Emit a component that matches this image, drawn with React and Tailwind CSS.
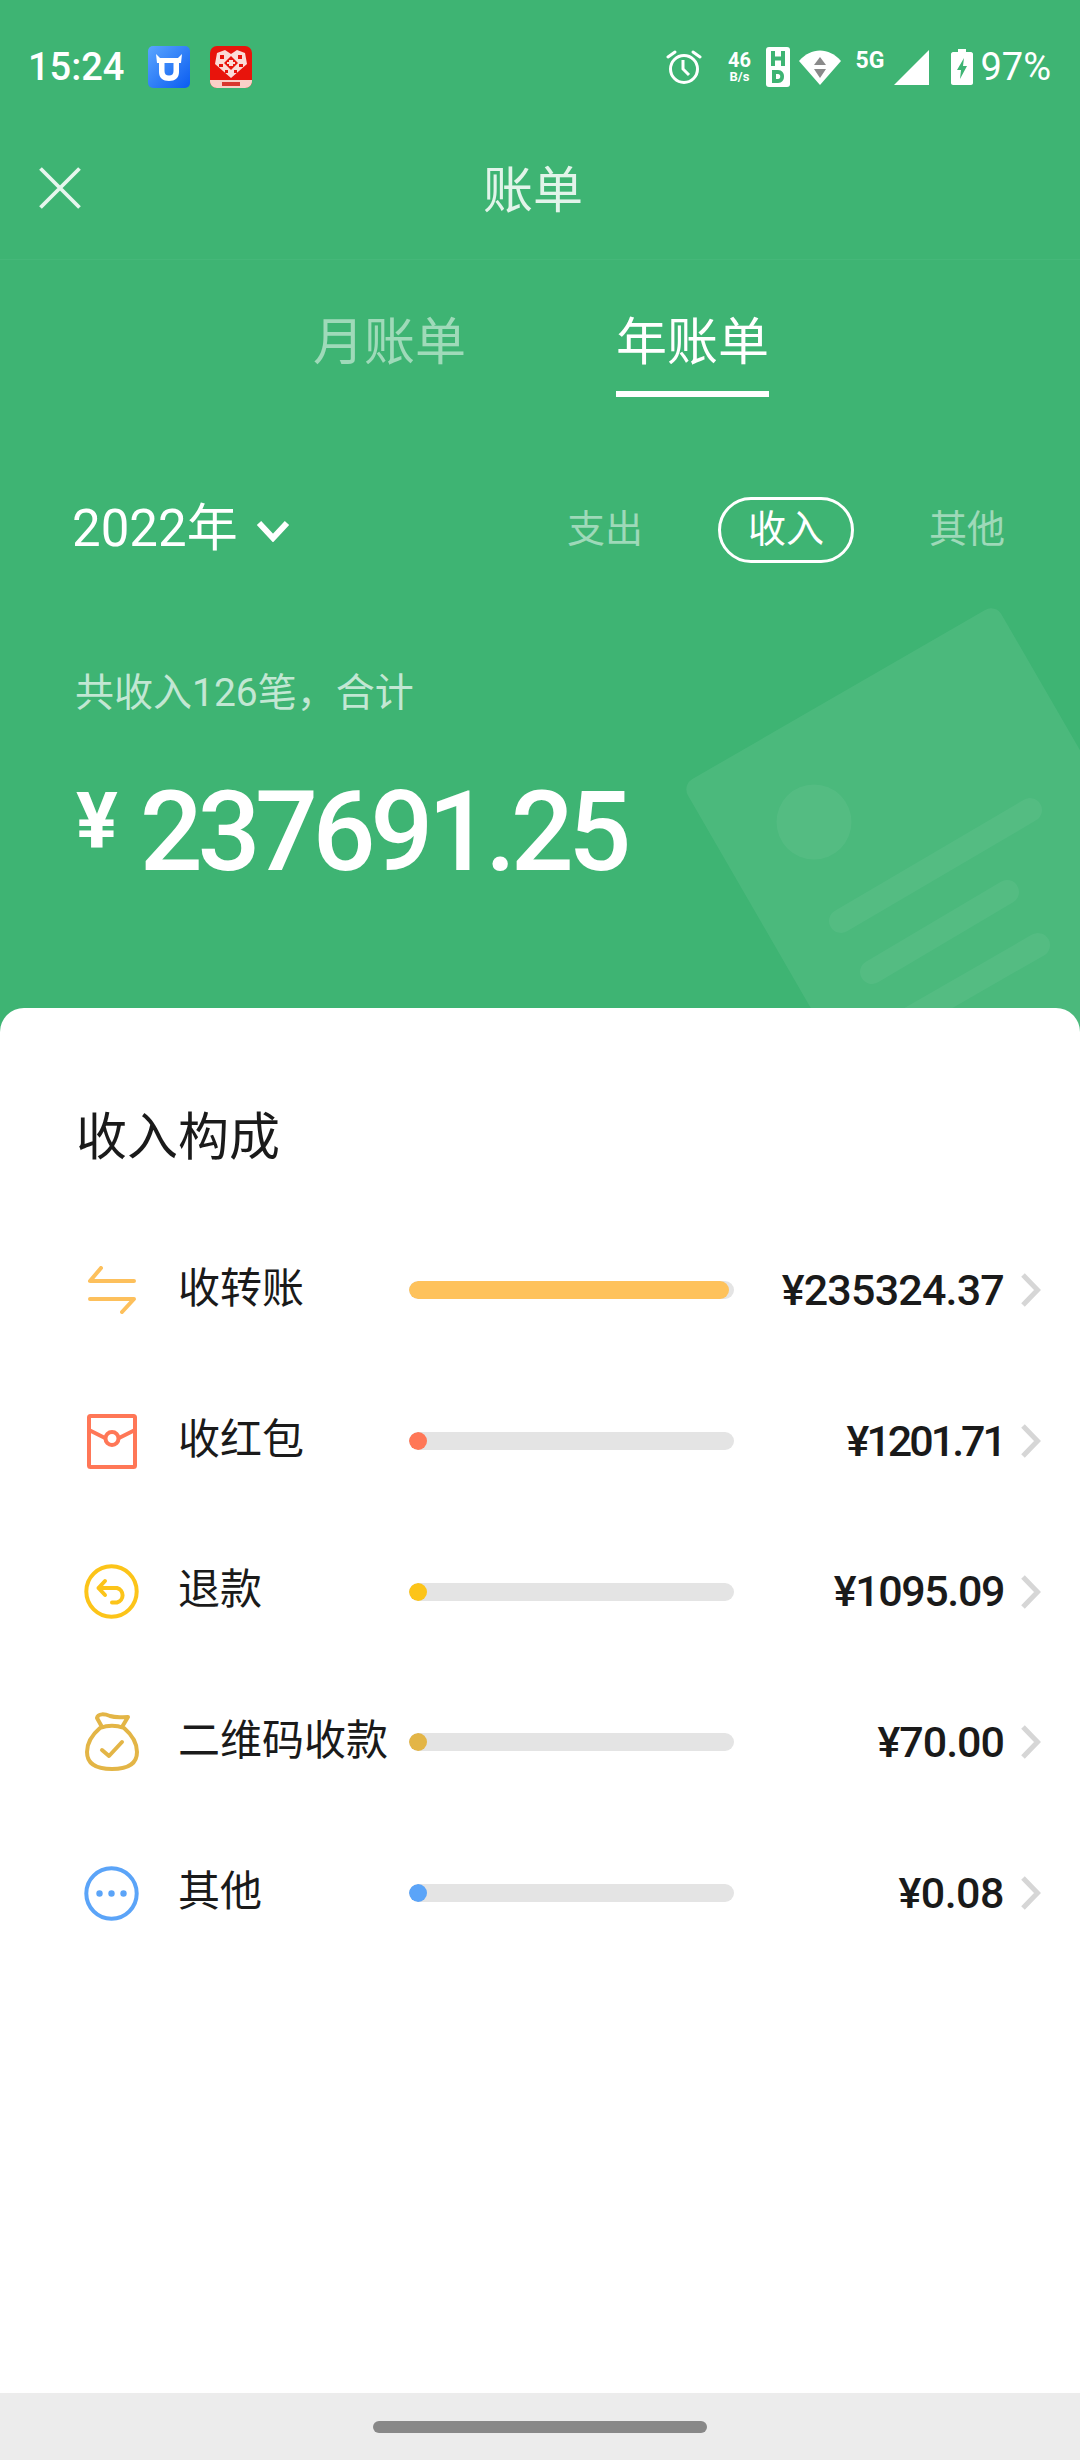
import React from "react";

const CJK = "font-['Roboto','Noto_Sans_CJK_SC',sans-serif]";

const Chevron = () => (
  <svg width="21" height="34" viewBox="0 0 21 34" className="ml-[16px] shrink-0">
    <path d="M3 2 L17.5 17 L3 32" fill="none" stroke="#d6d6d6" strokeWidth="5" />
  </svg>
);

const IconTransfer = () => (
  <svg width="48" height="48" viewBox="0 0 48 48">
    <g fill="none" stroke="#fdc05c" strokeWidth="4" strokeLinecap="round" strokeLinejoin="round">
      <path d="M13 2 L2 15 H46" />
      <path d="M2 33 H46 L34 46" />
    </g>
  </svg>
);

const IconPacket = () => (
  <svg width="50" height="55" viewBox="0 0 50 55">
    <g fill="none" stroke="#ff7757" strokeWidth="4" strokeLinejoin="round">
      <rect x="2" y="2" width="46" height="51" rx="1.5" />
      <path d="M2 16 L18 24 M32 24 L48 16" />
      <circle cx="25" cy="24.5" r="6.5" />
    </g>
  </svg>
);

const IconRefund = () => (
  <svg width="55" height="55" viewBox="0 0 55 55">
    <g fill="none" stroke="#fcc419" strokeWidth="4" strokeLinecap="round" strokeLinejoin="round">
      <circle cx="27.5" cy="27.5" r="25.2" />
      <path d="M21 17 L14.5 24 L21 31 M14.5 24 H33 A7.5 7.5 0 0 1 33 38.5 H28" />
    </g>
  </svg>
);

const IconBag = () => (
  <svg width="54" height="60" viewBox="0 0 54 60">
    <g fill="none" stroke="#e3b546" strokeWidth="4" strokeLinecap="round" strokeLinejoin="round">
      <path d="M15 16 C8 22 2 30 2 40 C2 53 13 57 27 57 C41 57 52 53 52 40 C52 30 46 22 39 16 C31 13 23 13 15 16 Z" />
      <path d="M17 15 L12 6 C13 1 20 2 25 4 C31 6 36 5 43 5 L37 15" />
      <path d="M17 38 L24 44 L37 30" />
    </g>
  </svg>
);

const IconMore = () => (
  <svg width="55" height="55" viewBox="0 0 55 55">
    <circle cx="27.5" cy="27.5" r="25.2" fill="none" stroke="#5ba4f8" strokeWidth="4" />
    <circle cx="15.5" cy="27.5" r="3.2" fill="#5ba4f8" />
    <circle cx="27.5" cy="27.5" r="3.2" fill="#5ba4f8" />
    <circle cx="39.5" cy="27.5" r="3.2" fill="#5ba4f8" />
  </svg>
);

const rows = [
  { icon: <IconTransfer />, name: "收转账", amount: "¥235324.37", color: "bg-[#fec25b]", w: "w-[320px]", track: "tracking-[-0.8px]" },
  { icon: <IconPacket />, name: "收红包", amount: "¥1201.71", color: "bg-[#ff7757]", w: "w-[18px]", track: "tracking-[-3px]" },
  { icon: <IconRefund />, name: "退款", amount: "¥1095.09", color: "bg-[#fcc419]", w: "w-[18px]", track: "tracking-[-1.4px]" },
  { icon: <IconBag />, name: "二维码收款", amount: "¥70.00", color: "bg-[#e3b546]", w: "w-[18px]", track: "tracking-[-1px]" },
  { icon: <IconMore />, name: "其他", amount: "¥0.08", color: "bg-[#5ba4f8]", w: "w-[18px]", track: "tracking-[-0.5px]" },
];

const Row = ({ r }) => (
  <div className="flex h-[150.7px] items-center pl-[84px] pr-[39px]">
    <div className="flex w-[55px] shrink-0 items-center justify-center">{r.icon}</div>
    <div className="w-[270px] shrink-0 whitespace-nowrap pb-[3px] pl-[39px] text-[42px] leading-none text-[#1a1a1a]">{r.name}</div>
    <div className="h-[18px] w-[325px] shrink-0 overflow-hidden rounded-full bg-[#e4e4e4]">
      <div className={`h-full rounded-full ${r.color} ${r.w}`} />
    </div>
    <div className={`flex-1 text-right font-['Roboto',sans-serif] text-[43px] font-medium leading-none text-[#1a1a1a] ${r.track}`}>
      {r.amount}
    </div>
    <Chevron />
  </div>
);

const StatusBar = () => (
  <div className="flex h-[100px] items-center justify-between pl-[28px] pr-[29px] pt-[34px] text-white">
    <div className="flex items-center">
      <span className="w-[120px] font-['Roboto',sans-serif] text-[38px] font-medium leading-none">15:24</span>
      <svg width="42" height="42" viewBox="0 0 42 42">
        <defs>
          <linearGradient id="blue" x1="0" y1="0" x2="1" y2="1">
            <stop offset="0" stopColor="#5aa5ff" />
            <stop offset="1" stopColor="#0a5cf0" />
          </linearGradient>
        </defs>
        <rect width="42" height="42" rx="5" fill="url(#blue)" />
        <path d="M8 8 L12 12 H30 L34 8 L33 17 H31 V26 C31 32 27 35 21 35 C15 35 11 32 11 26 V17 H9 Z M16.5 17 V25 C16.5 28 18 29.5 21 29.5 C24 29.5 25.5 28 25.5 25 V17 Z" fill="#fff" fillRule="evenodd" />
      </svg>
      <svg width="42" height="42" viewBox="0 0 42 42" className="ml-[20px]">
        <rect width="42" height="42" rx="7" fill="#e8140c" />
        <path d="M0 34 H42 V35 C42 39 39 42 35 42 H7 C3 42 0 39 0 35 Z" fill="#fbd0c8" />
        <path d="M21 8 L27 4 L35 7 L37 18 L21 32 L5 18 L7 7 L15 4 Z" fill="#fbdcd8" />
        <path d="M21 10 L28 17 L21 24 L14 17 Z" fill="#e8140c" />
        <path d="M19 14 H23 V20 H19 Z M17 16 H25 V18 H17 Z" fill="#fbdcd8" />
        <path d="M10 9 h4 v4 h-4 Z M28 9 h4 v4 h-4 Z M9 18 h4 v3 h-4 Z M29 18 h4 v3 h-4 Z M15 24 h3 v3 h-3 Z M24 24 h3 v3 h-3 Z" fill="#e8140c" />
        <rect x="12" y="36" width="18" height="4" fill="#d9382f" />
      </svg>
    </div>
    <div className="flex items-center">
      <svg width="36" height="36" viewBox="0 0 36 36">
        <g fill="none" stroke="#fff" strokeWidth="3">
          <circle cx="18" cy="20" r="13.5" />
          <path d="M17 11 V20 L23 26" />
          <path d="M2 8 L9 3 M34 8 L27 3" strokeLinecap="round" />
        </g>
      </svg>
      <div className="ml-[24px] flex w-[26px] flex-col items-center font-['Roboto',sans-serif] font-bold leading-none">
        <span className="text-[20px] leading-[20px]">46</span>
        <span className="text-[13px] leading-[14px]">B/s</span>
      </div>
      <svg width="24" height="40" viewBox="0 0 24 40" className="ml-[14px]">
        <rect width="24" height="40" rx="3" fill="#fff" />
        <path d="M7 4 V19 M17 4 V19 M7 11.5 H17" stroke="#3eb473" strokeWidth="4" fill="none" />
        <path d="M6 23 H12 C20 23 20 36 12 36 H6 Z" fill="#3eb473" />
        <path d="M10 27 H12 C15 27 15 32 12 32 H10 Z" fill="#fff" />
      </svg>
      <svg width="42" height="35" viewBox="0 0 42 35" className="ml-[9px]">
        <path d="M0 11 C12 -3 30 -3 42 11 L21 35 Z" fill="#fff" />
        <path d="M21 7 L27 15 H15 Z M21 28 L27 19 H15 Z" fill="#8a8a8a" />
      </svg>
      <span className="mb-[14px] ml-[14px] w-[32px] whitespace-nowrap font-['Roboto',sans-serif] text-[23px] font-bold leading-none">5G</span>
      <svg width="35" height="35" viewBox="0 0 35 35" className="ml-[7px]">
        <path d="M0 35 L35 0 V35 Z" fill="#fff" />
      </svg>
      <svg width="22" height="36" viewBox="0 0 22 36" className="ml-[22px]">
        <path d="M7 0 H15 V3 H20 C21 3 22 4 22 5 V34 C22 35 21 36 20 36 H2 C1 36 0 35 0 34 V5 C0 4 1 3 2 3 H7 Z" fill="#fff" />
        <path d="M13 9 L6 21 H10 L9 30 L16 17 H12 Z" fill="#3eb473" />
      </svg>
      <span className="ml-[7px] font-['Roboto',sans-serif] text-[38px] leading-none">97%</span>
    </div>
  </div>
);

export default function App() {
  return (
    <div className={`flex h-[2460px] w-[1080px] flex-col overflow-hidden bg-white ${CJK}`}>
      <div className="relative h-[1040px] shrink-0 overflow-hidden bg-[#3eb473] text-white">
        <svg width="420" height="450" viewBox="0 0 420 450" className="absolute left-[660px] top-[590px]">
          <rect x="0" y="0" width="362" height="520" rx="12" fill="#fff" fillOpacity="0.07" transform="translate(22 195) rotate(-30)" />
          <circle cx="154" cy="232" r="37.5" fill="#fff" fillOpacity="0.05" />
          <g stroke="#fff" strokeOpacity="0.05" strokeWidth="24" strokeLinecap="round" fill="none">
            <path d="M181 331 L370 220" />
            <path d="M212 382 L347 302" />
            <path d="M218 447 L378 355" />
          </g>
        </svg>

        <div className="relative">
          <StatusBar />
          <div className="flex h-[160px] items-center border-b border-[#45b779] pl-[39px] pt-[17px]">
            <svg width="42" height="42" viewBox="0 0 42 42" className="shrink-0">
              <path d="M1.5 1.5 L40.5 40.5 M40.5 1.5 L1.5 40.5" stroke="#fff" strokeOpacity="0.88" strokeWidth="3.8" fill="none" />
            </svg>
            <span className="ml-[402px] mt-[6px] text-[50px] leading-none text-white/85">账单</span>
          </div>
          <div className="flex gap-[150px] pl-[313px] pt-[53px]">
            <div className="w-[153px] whitespace-nowrap text-[51px] leading-[60px] text-white/50">月账单</div>
            <div className="w-[153px] whitespace-nowrap border-b-[6px] border-white pb-[18px] text-[51px] leading-[60px]">年账单</div>
          </div>
          <div className="mt-[100px] flex h-[66px] items-center justify-between pl-[72px] pr-[75px]">
            <div className="flex items-center">
              <span className="pb-[3px] text-[51px] leading-[64px]">2022年</span>
              <svg width="34" height="22" viewBox="0 0 34 22" className="ml-[18px] mt-[2px]">
                <path d="M3 3 L17 18 L31 3" fill="none" stroke="#fff" strokeWidth="6" />
              </svg>
            </div>
            <div className="flex items-center">
              <span className="w-[76px] pb-[3px] text-[38px] leading-none text-white/50">支出</span>
              <span className="ml-[75px] flex h-[66px] w-[136px] items-center justify-center rounded-[33px] border-[3px] border-white pb-[3px] text-[38px] leading-none">收入</span>
              <span className="ml-[75px] w-[76px] pb-[3px] text-[38px] leading-none text-white/50">其他</span>
            </div>
          </div>
          <div className="pl-[75px] pt-[108px] text-[39px] leading-[44px] text-white/70">共收入126笔，合计</div>
          <div className="flex items-start pl-[76px] pt-[52px]">
            <span className="mt-[15px] font-['Roboto',sans-serif] text-[78px] font-bold leading-[80px]">¥</span>
            <span className="ml-[22px] font-['Roboto',sans-serif] text-[111px] font-medium leading-[130px] tracking-[-5.5px]">237691.25</span>
          </div>
        </div>
      </div>

      <div className="relative -mt-[32px] flex flex-1 flex-col rounded-t-[24px] bg-white">
        <div className="pl-[76px] pt-[100px] text-[51px] leading-[60px] text-[#1a1a1a]">收入构成</div>
        <div className="pt-[47px]">
          {rows.map((r) => (
            <Row key={r.name} r={r} />
          ))}
        </div>
      </div>

      <div className="flex h-[67px] shrink-0 items-center justify-center bg-[#ececec]">
        <div className="h-[12px] w-[334px] rounded-full bg-[#888888]" />
      </div>
    </div>
  );
}
